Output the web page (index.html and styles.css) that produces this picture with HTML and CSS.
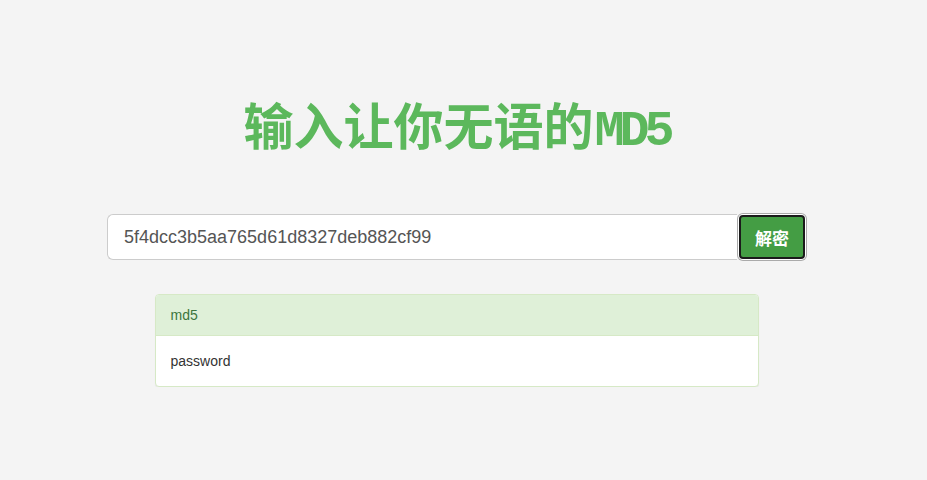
FILE: index.html
```html
<!DOCTYPE html>
<html lang="zh-CN">
<head>
  <meta charset="UTF-8" />
  <meta name="viewport" content="width=device-width, initial-scale=1" />
  <title>输入让你无语的MD5</title>
  <link rel="stylesheet" href="styles.css">
</head>
<body>
<div class="page">
  <h1 class="title">输入让你无语的<span class="title-latin">MD5</span></h1>
  <div class="search">
    <input class="search-input" type="text" value="5f4dcc3b5aa765d61d8327deb882cf99" />
    <button class="search-btn">解密</button>
  </div>
  <div class="panel">
    <div class="panel-heading">md5</div>
    <div class="panel-body">password</div>
  </div>
</div>
</body>
</html>
```

FILE: styles.css
```css
body {
  margin: 0;
  background: #f4f4f4;
  font-family: "Liberation Sans", Arial, sans-serif;
  font-size: 14px;
  color: #333;
}
.page {
  width: 913px;
  padding-top: 98px;
  display: flex;
  flex-direction: column;
  align-items: center;
}
.title {
  margin: 0;
  font-family: "Liberation Mono", "Noto Sans CJK SC", monospace;
  font-weight: bold;
  font-size: 50px;
  line-height: 68px;
  color: #5cb85c;
}
.title-latin {
  letter-spacing: -5px;
  margin-left: 1px;
}
.search {
  display: flex;
  width: 699px;
  margin-top: 48px;
}
.search-input {
  flex: 1;
  height: 46px;
  box-sizing: border-box;
  padding: 10px 16px;
  font-family: "Liberation Sans", Arial, sans-serif;
  font-size: 18px;
  color: #555;
  background: #fff;
  border: 1px solid #ccc;
  border-right: none;
  border-radius: 6px 0 0 6px;
  outline: none;
}
.search-btn {
  width: 66px;
  height: 44px;
  margin: 1px 1px 1px 2px;
  box-sizing: border-box;
  background: #449d44;
  color: #fff;
  font-family: "Noto Sans CJK SC", sans-serif;
  font-weight: bold;
  font-size: 17px;
  border: 2px solid #1b1b1b;
  border-radius: 4px;
  box-shadow: 0 0 0 1px #fff, 0 0 0 2px #aaa;
}
.panel {
  width: 604px;
  box-sizing: border-box;
  margin-top: 34px;
  background: #fff;
  border: 1px solid #d6e9c6;
  border-radius: 4px;
  box-shadow: 0 1px 1px rgba(0,0,0,0.05);
}
.panel-heading {
  padding: 10px 15px;
  line-height: 20px;
  background: #dff0d8;
  color: #3c763d;
  border-bottom: 1px solid #d6e9c6;
  border-radius: 3px 3px 0 0;
}
.panel-body {
  padding: 15px;
  line-height: 20px;
}
```
